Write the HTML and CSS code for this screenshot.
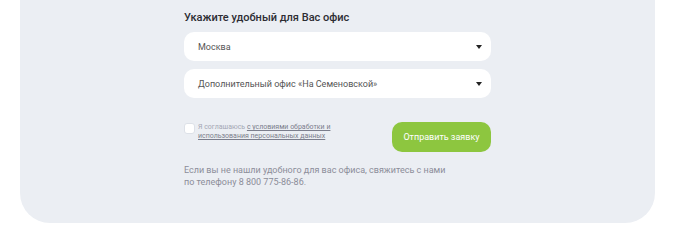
FILE: index.html
```html
<!DOCTYPE html>
<html lang="ru">
<head>
	<meta charset="UTF-8">
	<title>Выбор офиса</title>
	<link rel="stylesheet" href="styles.css">
</head>
<body>
	<div class="panel">
		<form class="office-form">
			<div class="title">Укажите удобный для Вас офис</div>
			<div class="select">
				<span>Москва</span>
				<i class="arrow"></i>
			</div>
			<div class="select">
				<span>Дополнительный офис «На Семеновской»</span>
				<i class="arrow"></i>
			</div>
			<div class="bottom">
				<label class="agree">
					<span class="check"></span>
					<span class="agree-text">Я соглашаюсь <a href="#">с условиями обработки и использования персональных данных</a></span>
				</label>
				<button type="button" class="send">Отправить заявку</button>
			</div>
			<p class="note">Если вы не нашли удобного для вас офиса, свяжитесь с нами по телефону 8 800 775-86-86.</p>
		</form>
	</div>
</body>
</html>
```

FILE: styles.css
```css
*{
	margin: 0;
	padding: 0;
	box-sizing: border-box;
}
body{
	background: #fff;
	font-family: Roboto, "Noto Sans", sans-serif;
	color: #333;
}
.panel{
	width: 635px;
	height: 223px;
	margin-left: 20px;
	background: #ebeef3;
	border-radius: 0 0 30px 30px;
	padding-top: 11px;
}
.office-form{
	width: 307px;
	margin: 0 auto;
}
.title{
	font-size: 11px;
	font-weight: 500;
	line-height: 14px;
	color: #2d2d33;
	margin-bottom: 7px;
}
.select{
	height: 29px;
	background: #fff;
	border-radius: 10px;
	display: flex;
	align-items: center;
	justify-content: space-between;
	padding: 0 9px 0 14px;
	font-size: 9px;
	color: #555;
	margin-bottom: 8px;
}
.arrow{
	width: 0;
	height: 0;
	border-left: 3px solid transparent;
	border-right: 3px solid transparent;
	border-top: 4px solid #222;
}
.bottom{
	display: flex;
	justify-content: space-between;
	align-items: flex-start;
	margin-top: 24px;
}
.agree{
	display: flex;
	align-items: flex-start;
	gap: 3px;
	width: 165px;
	padding-top: 1px;
}
.check{
	flex: none;
	width: 11px;
	height: 11px;
	background: #fff;
	border: 1px solid #dde1e8;
	border-radius: 3px;
}
.agree-text{
	font-size: 7px;
	line-height: 9px;
	color: #a4a7b3;
}
.agree-text a{
	color: #7b7e8c;
	text-decoration: underline;
}
.send{
	width: 99px;
	height: 30px;
	border: none;
	border-radius: 10px;
	background: #8dc63f;
	color: #fff;
	font-family: inherit;
	font-size: 9px;
}
.note{
	margin-top: 12px;
	width: 270px;
	font-size: 9px;
	line-height: 12px;
	color: #8b8d99;
}
```
